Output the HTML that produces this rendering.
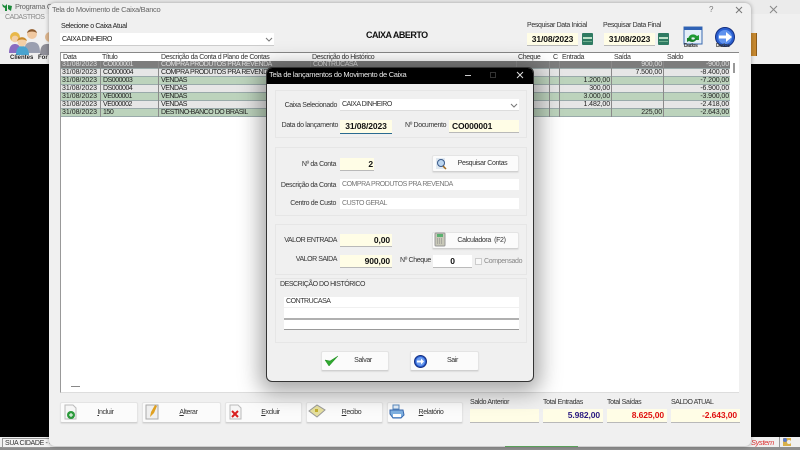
<!DOCTYPE html>
<html><head><meta charset="utf-8"><style>
html,body{margin:0;padding:0;width:800px;height:450px;overflow:hidden;background:#000}
*{box-sizing:border-box}
body{font-family:"Liberation Sans",sans-serif;font-size:7px;letter-spacing:-.35px;color:#222;position:relative}
.a{position:absolute}
.t{position:absolute;white-space:nowrap;line-height:10px;height:10px;color:#333}
.u{letter-spacing:-.45px}
.r{text-align:right}
.inp{position:absolute;background:#fffde6;border-bottom:1px solid #b9b9b9;font-weight:bold;font-size:8.5px;letter-spacing:-.1px;color:#111;line-height:13px;white-space:nowrap;overflow:hidden}
.wh{position:absolute;background:#fff;color:#777;line-height:11px;padding-left:2px;white-space:nowrap;letter-spacing:-.47px}
.btn{position:absolute;background:#fbfbfb;border:1px solid #e4e4e4;border-bottom-color:#d0d0d0;border-radius:2px;box-shadow:0 1px 1px #ddd;text-align:center;color:#333}
.panel{position:absolute;border:1px solid #e6e6e6;background:#f0f0f0}
.row{position:absolute;left:0;width:669px;height:8px;line-height:8px;color:#222;border-bottom:1px solid #9aa;}
.row span{position:absolute;top:0;height:8px;white-space:nowrap;overflow:hidden;border-right:1px solid #8a8a8a;padding-left:2px;font-size:7px;letter-spacing:-.47px}
.row span:first-child{letter-spacing:0;padding-left:1px}
.row .n{text-align:right;padding:0 1px 0 0;letter-spacing:-.1px}
.g{background:#bcd3bc}.w{background:#e6e6e6}.s{background:#7d7d7d;color:#ddd}.s span{color:#ddd}
.h{position:absolute;top:0;height:9px;line-height:9px;color:#333;white-space:nowrap;font-size:7px}
svg{position:absolute;overflow:visible}
</style></head><body>

<!-- parent window -->
<div class="a" style="left:0;top:0;width:800px;height:64px;background:#f0f0f0"></div>
<div class="a" style="left:0;top:0;width:800px;height:14px;background:#ebebeb"></div>
<svg style="left:1px;top:3px" width="12" height="9"><path d="M1 1l3 2 2-2v7H4V5L2 4zM7 2l4 1-1 5-3-2z" fill="#1c8a3a"/></svg>
<div class="t" style="left:15px;top:2px;color:#666;font-size:7.5px">Programa C</div>
<div class="t u" style="left:5px;top:13px;color:#888;font-size:7px">CADASTROS</div>
<svg style="left:7px;top:28px" width="44" height="27">
<path d="M2 25c0-7 3-9 6-9s6 2 6 9z" fill="#8a6cc0"/><circle cx="8" cy="9" r="5" fill="#e8b84a"/><circle cx="8" cy="11" r="3.4" fill="#f3cfa6"/>
<path d="M17 25c0-9 3-11 8-11s8 2 8 11z" fill="#9a9fb0"/><circle cx="25" cy="6" r="5" fill="#f0c8a0"/><path d="M20 5c1-5 9-5 10 0-3-2-7-2-10 0z" fill="#8a5a30"/>
<path d="M9 27c0-7 3-9 6-9s7 2 7 9z" fill="#49a3cf"/><circle cx="15" cy="14" r="4.5" fill="#f3cfa6"/><path d="M10 13c1-5 9-5 10 0-3-2-7-2-10 0z" fill="#c98a2a"/>
<path d="M33 27c0-9 3-11 7-11h4v11z" fill="#8f8f98"/><circle cx="43" cy="9" r="5" fill="#e0b890"/>
</svg>
<div class="t" style="left:10px;top:53px;font-weight:bold;font-size:6px;letter-spacing:0;color:#222">Clientes</div>
<div class="t" style="left:38px;top:53px;font-weight:bold;font-size:6px;letter-spacing:0;color:#222">For</div>
<svg style="left:738px;top:5px" width="60" height="12"><rect x="1" y="3" width="5" height="5" fill="none" stroke="#888"/><path d="M3 3V1h5v5H6" fill="none" stroke="#888"/><path d="M32 1l7 7M39 1l-7 7" stroke="#888"/></svg>
<div class="a" style="left:751px;top:33px;width:6px;height:23px;background:#c8892f;border-right:1px solid #8a5a1a"></div>
<div class="a" style="left:0;top:437px;width:800px;height:13px;background:#f0f0f0"></div>
<div class="a" style="left:0;top:447px;width:800px;height:3px;background:#8f8f8f"></div>
<div class="a" style="left:2px;top:438px;width:48px;height:10px;background:#f4f4f4;border:1px solid #999;border-right:0;padding-left:2px;font-size:7px;line-height:9px;color:#333;white-space:nowrap;overflow:hidden">SUA CIDADE - U</div>
<div class="t" style="left:751px;top:438px;color:#d33;font-style:italic;font-size:7.5px;">System</div>
<div class="a" style="left:779px;top:437px;width:1px;height:10px;background:#999"></div>
<svg style="left:782px;top:437px" width="10" height="10"><rect x="1" y="1" width="8" height="8" fill="#d8b04a"/><circle cx="3" cy="3" r="2" fill="#5a7ac8"/><circle cx="7" cy="5" r="2" fill="#f0f0f0"/></svg>

<!-- main dialog -->
<div class="a" style="left:49px;top:3px;width:702px;height:443px;background:#f0f0f0;border-radius:6px;box-shadow:0 0 4px rgba(0,0,0,.35)"></div>
<div class="a" style="left:505px;top:446px;width:73px;height:1px;background:#5aa05a"></div>
<div class="t" style="left:52px;top:5px;color:#666;font-size:7.5px;letter-spacing:-.3px">Tela do Movimento de Caixa/Banco</div>
<div class="t" style="left:709px;top:5px;color:#777;font-size:8px">?</div>
<svg style="left:735px;top:6px" width="10" height="10"><path d="M1 1l6 6M7 1l-6 6" stroke="#777"/></svg>

<div class="t" style="left:61px;top:22px;color:#222">Selecione o Caixa Atual</div>
<div class="a u" style="left:60px;top:33px;width:214px;height:13px;background:#fff;border-bottom:1px solid #ccc;line-height:13px;padding-left:2px;color:#222;letter-spacing:-.5px">CAIXA DINHEIRO</div>
<svg style="left:266px;top:38px" width="6" height="4"><path d="M0 0l3 3 3-3" fill="none" stroke="#777"/></svg>
<div class="t" style="left:366px;top:30px;font-weight:bold;font-size:9px;letter-spacing:-.5px;color:#111">CAIXA ABERTO</div>
<div class="t" style="left:527px;top:21px">Pesquisar Data Inicial</div>
<div class="t" style="left:603px;top:21px">Pesquisar Data Final</div>
<div class="inp" style="left:527px;top:33px;width:51px;height:13px;text-align:center">31/08/2023</div>
<div class="inp" style="left:604px;top:33px;width:51px;height:13px;text-align:center">31/08/2023</div>
<svg style="left:582px;top:33px" width="11" height="12"><rect width="11" height="12" rx="1" fill="#2f7a62"/><rect x="1" y="4" width="9" height="2" fill="#bde0c8"/><rect x="1" y="8" width="9" height="1" fill="#6fb08f"/></svg>
<svg style="left:658px;top:33px" width="11" height="12"><rect width="11" height="12" rx="1" fill="#2f7a62"/><rect x="1" y="4" width="9" height="2" fill="#bde0c8"/><rect x="1" y="8" width="9" height="1" fill="#6fb08f"/></svg>
<svg style="left:684px;top:27px" width="19" height="20"><rect x="0" y="0" width="18" height="17" fill="#e4eef8" stroke="#3a6ab0"/><rect x="0" y="0" width="18" height="3" fill="#2f62b5"/><path d="M4 12c1-5 6-6 9-3l2-1v5h-5l1-2c-2-1-4-1-5 2z" fill="#1f9a34"/><path d="M13 11c-1 4-5 5-8 3l-2 1v-4h5l-1 1c2 1 4 1 5-1z" fill="#17802a"/></svg>
<div class="t" style="left:684px;top:41px;font-size:5px;font-weight:bold">Dados</div>
<svg style="left:715px;top:27px" width="20" height="20"><circle cx="10" cy="10" r="9.5" fill="#2a5fd0" stroke="#152f80"/><circle cx="10" cy="10" r="7" fill="#5f92ee"/><path d="M4 8.5h7V5l6 5-6 5v-3.500H4z" fill="#fff"/></svg>
<div class="t" style="left:716px;top:41px;font-size:5px;font-weight:bold">Dados</div>

<!-- grid -->
<div class="a" style="left:60px;top:52px;width:679px;height:341px;background:#fff;border-top:1px solid #888;border-left:1px solid #999;border-bottom:1px solid #ddd"></div>
<div class="a" style="left:61px;top:53px;width:669px;height:70px">
<div class="h" style="left:2px">Data</div><div class="h" style="left:41px">Título</div><div class="h" style="left:100px">Descrição da Conta d Plano de Contas</div><div class="h" style="left:251px">Descrição do Histórico</div><div class="h" style="left:457px">Cheque</div><div class="h" style="left:492px">C</div><div class="h" style="left:501px">Entrada</div><div class="h" style="left:553px">Saída</div><div class="h" style="left:606px">Saldo</div>
<div class="row s" style="top:8px"><span style="left:0;width:40px">31/08/2023</span><span style="left:40px;width:58px">CO000001</span><span style="left:98px;width:152px">COMPRA PRODUTOS PRA REVENDA</span><span style="left:250px;width:206px">CONTRUCASA</span><span style="left:456px;width:33px"></span><span style="left:489px;width:10px"></span><span class="n" style="left:499px;width:52px"></span><span class="n" style="left:551px;width:52px">900,00</span><span class="n" style="left:603px;width:66px;border:0">-900,00</span></div>
<div class="row w" style="top:16px"><span style="left:0;width:40px">31/08/2023</span><span style="left:40px;width:58px">CO000004</span><span style="left:98px;width:152px">COMPRA PRODUTOS PRA REVENDA</span><span style="left:250px;width:206px"></span><span style="left:456px;width:33px"></span><span style="left:489px;width:10px"></span><span class="n" style="left:499px;width:52px"></span><span class="n" style="left:551px;width:52px">7.500,00</span><span class="n" style="left:603px;width:66px;border:0">-8.400,00</span></div>
<div class="row g" style="top:24px"><span style="left:0;width:40px">31/08/2023</span><span style="left:40px;width:58px">DS000003</span><span style="left:98px;width:152px">VENDAS</span><span style="left:250px;width:206px"></span><span style="left:456px;width:33px"></span><span style="left:489px;width:10px"></span><span class="n" style="left:499px;width:52px">1.200,00</span><span class="n" style="left:551px;width:52px"></span><span class="n" style="left:603px;width:66px;border:0">-7.200,00</span></div>
<div class="row w" style="top:32px"><span style="left:0;width:40px">31/08/2023</span><span style="left:40px;width:58px">DS000004</span><span style="left:98px;width:152px">VENDAS</span><span style="left:250px;width:206px"></span><span style="left:456px;width:33px"></span><span style="left:489px;width:10px"></span><span class="n" style="left:499px;width:52px">300,00</span><span class="n" style="left:551px;width:52px"></span><span class="n" style="left:603px;width:66px;border:0">-6.900,00</span></div>
<div class="row g" style="top:40px"><span style="left:0;width:40px">31/08/2023</span><span style="left:40px;width:58px">VE000001</span><span style="left:98px;width:152px">VENDAS</span><span style="left:250px;width:206px"></span><span style="left:456px;width:33px"></span><span style="left:489px;width:10px"></span><span class="n" style="left:499px;width:52px">3.000,00</span><span class="n" style="left:551px;width:52px"></span><span class="n" style="left:603px;width:66px;border:0">-3.900,00</span></div>
<div class="row w" style="top:48px"><span style="left:0;width:40px">31/08/2023</span><span style="left:40px;width:58px">VE000002</span><span style="left:98px;width:152px">VENDAS</span><span style="left:250px;width:206px"></span><span style="left:456px;width:33px"></span><span style="left:489px;width:10px"></span><span class="n" style="left:499px;width:52px">1.482,00</span><span class="n" style="left:551px;width:52px"></span><span class="n" style="left:603px;width:66px;border:0">-2.418,00</span></div>
<div class="row g" style="top:56px"><span style="left:0;width:40px">31/08/2023</span><span style="left:40px;width:58px">150</span><span style="left:98px;width:152px">DESTINO-BANCO DO BRASIL</span><span style="left:250px;width:206px"></span><span style="left:456px;width:33px"></span><span style="left:489px;width:10px"></span><span class="n" style="left:499px;width:52px"></span><span class="n" style="left:551px;width:52px">225,00</span><span class="n" style="left:603px;width:66px;border:0">-2.643,00</span></div>
</div>
<div class="a" style="left:733px;top:63px;width:2px;height:10px;background:#999"></div>
<div class="a" style="left:71px;top:386px;width:9px;height:1px;background:#888"></div>

<!-- bottom buttons -->
<div class="btn" style="left:60px;top:402px;width:78px;height:21px;line-height:19px;padding-left:13px"><u>I</u>ncluir</div>
<svg style="left:64px;top:405px" width="13" height="15"><path d="M1 0h8l3 3v11H1z" fill="#f6f6f6" stroke="#bbb"/><circle cx="7" cy="10" r="4" fill="#2c9a3c"/><path d="M5 10h4M7 8v4" stroke="#fff"/></svg>
<div class="btn" style="left:142px;top:402px;width:79px;height:21px;line-height:19px;padding-left:14px"><u>A</u>lterar</div>
<svg style="left:146px;top:405px" width="13" height="15"><rect x="0" y="0" width="12" height="14" fill="#efefef" stroke="#aaa"/><path d="M4 12l1-5 4-7 2 1-3 7z" fill="#e0a020"/></svg>
<div class="btn" style="left:225px;top:402px;width:77px;height:21px;line-height:19px;padding-left:14px"><u>E</u>xcluir</div>
<svg style="left:229px;top:405px" width="13" height="15"><path d="M1 0h8l3 3v11H1z" fill="#f6f6f6" stroke="#bbb"/><path d="M3 6l6 6M9 6l-6 6" stroke="#d91f1f" stroke-width="2"/></svg>
<div class="btn" style="left:306px;top:402px;width:77px;height:21px;line-height:19px;padding-left:14px"><u>R</u>ecibo</div>
<svg style="left:309px;top:404px" width="17" height="14"><path d="M0 7l8-6 8 5-8 7z" fill="#e6e0a0" stroke="#999"/><rect x="6" y="5" width="3" height="3" fill="#c4b030"/></svg>
<div class="btn" style="left:387px;top:402px;width:76px;height:21px;line-height:19px;padding-left:12px"><u>R</u>elatório</div>
<svg style="left:390px;top:405px" width="15" height="14"><path d="M3 0h6v4H3z" fill="#e4eef8" stroke="#5a8ac0"/><path d="M0 5h13l1 5-3 3H3L0 9z" fill="#7fb0e0" stroke="#3a6ab0"/><rect x="3" y="9" width="8" height="3" fill="#fff"/></svg>

<div class="t" style="left:470px;top:398px">Saldo Anterior</div>
<div class="t" style="left:543px;top:398px">Total Entradas</div>
<div class="t" style="left:607px;top:398px">Total Saídas</div>
<div class="t u" style="left:671px;top:398px">SALDO ATUAL</div>
<div class="inp" style="left:470px;top:409px;width:69px;height:14px"></div>
<div class="inp r" style="left:543px;top:409px;width:60px;height:14px;color:#2a1a80;padding-right:3px">5.982,00</div>
<div class="inp r" style="left:607px;top:409px;width:60px;height:14px;color:#e01010;padding-right:3px">8.625,00</div>
<div class="inp r" style="left:671px;top:409px;width:69px;height:14px;color:#e01010;padding-right:3px">-2.643,00</div>

<!-- modal -->
<div class="a" style="left:266px;top:67px;width:268px;height:315px;background:#f0f0f0;border:1px solid #333;border-radius:6px;box-shadow:0 4px 22px 6px rgba(0,0,0,.35);overflow:hidden">
<div class="a" style="left:-1px;top:-1px;width:268px;height:17px;background:#000"></div>
</div>
<div class="t" style="left:269px;top:70px;color:#e8e8e8;font-size:7.5px;letter-spacing:-.3px">Tela de lançamentos do Movimento de Caixa</div>
<div class="a" style="left:465px;top:75px;width:6px;height:1px;background:#ccc"></div>
<div class="a" style="left:490px;top:72px;width:6px;height:6px;border:1px solid #333"></div>
<svg style="left:516px;top:71px" width="8" height="8"><path d="M1 1l6 6M7 1l-6 6" stroke="#ddd"/></svg>

<div class="panel" style="left:275px;top:90px;width:252px;height:48px"></div>
<div class="panel" style="left:275px;top:147px;width:252px;height:69px"></div>
<div class="panel" style="left:275px;top:224px;width:252px;height:51px"></div>
<div class="panel" style="left:275px;top:278px;width:252px;height:65px"></div>

<div class="t r" style="left:270px;top:101px;width:67px">Caixa Selecionado</div>
<div class="a" style="left:340px;top:99px;width:179px;height:12px;background:#fff;border-bottom:1px solid #ddd;line-height:12px;padding-left:2px;color:#333;letter-spacing:-.5px">CAIXA DINHEIRO</div>
<svg style="left:511px;top:104px" width="6" height="4"><path d="M0 0l3 3 3-3" fill="none" stroke="#777"/></svg>
<div class="t r" style="left:270px;top:121px;width:68px">Data do lançamento</div>
<div class="inp" style="left:340px;top:120px;width:52px;height:14px;text-align:center;border-bottom:1px solid #2a6a90;line-height:12px">31/08/2023</div>
<div class="t" style="left:405px;top:121px">Nº Documento</div>
<div class="inp" style="left:449px;top:120px;width:70px;height:13px;padding-left:3px;line-height:12px">CO000001</div>

<div class="t r" style="left:270px;top:160px;width:66px">Nº da Conta</div>
<div class="inp r" style="left:340px;top:158px;width:34px;height:13px;padding-right:1px;line-height:12px">2</div>
<div class="btn" style="left:432px;top:155px;width:87px;height:17px;line-height:16px;padding-left:14px">Pesquisar Contas</div>
<svg style="left:436px;top:158px" width="12" height="12"><rect x="0" y="0" width="9" height="11" fill="#dfe8f0"/><circle cx="5" cy="5" r="3.500" fill="#bcd6f0" stroke="#3a5a8a"/><path d="M7 8l3 3" stroke="#a06a20" stroke-width="1.500"/></svg>
<div class="t r" style="left:270px;top:181px;width:66px">Descrição da Conta</div>
<div class="wh" style="left:340px;top:179px;width:179px;height:11px">COMPRA PRODUTOS PRA REVENDA</div>
<div class="t r" style="left:270px;top:199px;width:66px">Centro de Custo</div>
<div class="wh" style="left:340px;top:198px;width:179px;height:11px">CUSTO GERAL</div>

<div class="t r u" style="left:270px;top:236px;width:67px">VALOR ENTRADA</div>
<div class="inp r" style="left:340px;top:234px;width:52px;height:13px;padding-right:2px;line-height:12px">0,00</div>
<div class="btn" style="left:432px;top:232px;width:87px;height:17px;line-height:16px;padding-left:12px">Calculadora&nbsp; (F2)</div>
<svg style="left:435px;top:233px" width="11" height="14"><rect width="10" height="13" rx="1" fill="#c8c8b8" stroke="#999"/><rect x="2" y="1" width="6" height="3" fill="#5ab070"/><path d="M2 6h6M2 8h6M2 10h6" stroke="#888" stroke-dasharray="1 1"/></svg>
<div class="t r u" style="left:270px;top:255px;width:67px">VALOR SAIDA</div>
<div class="inp r" style="left:340px;top:255px;width:52px;height:13px;padding-right:2px;line-height:12px">900,00</div>
<div class="t" style="left:400px;top:256px">Nº Cheque</div>
<div class="a" style="left:433px;top:255px;width:39px;height:13px;background:#fff;border-bottom:1px solid #bbb;font-weight:bold;font-size:8.500px;line-height:12px;text-align:center;color:#111">0</div>
<div class="a" style="left:475px;top:258px;width:7px;height:7px;background:#f8f8f8;border:1px solid #ccc"></div>
<div class="t" style="left:484px;top:257px;color:#888">Compensado</div>

<div class="t u" style="left:280px;top:280px;color:#333;background:#f0f0f0">DESCRIÇÃO DO HISTÓRICO</div>
<div class="a u" style="left:284px;top:297px;width:235px;height:10px;background:#fff;line-height:10px;padding-left:2px;color:#333">CONTRUCASA</div>
<div class="a" style="left:284px;top:308px;width:235px;height:10px;background:#fff"></div>
<div class="a" style="left:284px;top:318px;width:235px;height:2px;background:#b0b0b0"></div>
<div class="a" style="left:284px;top:320px;width:235px;height:10px;background:#fff;border-bottom:1px solid #999"></div>

<div class="btn" style="left:321px;top:351px;width:68px;height:20px;line-height:18px;padding-left:16px">Salvar</div>
<svg style="left:324px;top:355px" width="15" height="12"><path d="M1 5l4 6L14 1 6 6z" fill="#2fa82f" stroke="#1c8a1c" stroke-width=".5"/></svg>
<div class="btn" style="left:410px;top:351px;width:69px;height:20px;line-height:18px;padding-left:16px">Sair</div>
<svg style="left:414px;top:355px" width="13" height="13"><circle cx="6.500" cy="6.500" r="6" fill="#2a5fd0" stroke="#152f80"/><circle cx="6.500" cy="6.500" r="4.500" fill="#6a9aee"/><path d="M3 5.500h4V3.500l3 3-3 3V7.500H3z" fill="#fff"/></svg>
</body></html>
